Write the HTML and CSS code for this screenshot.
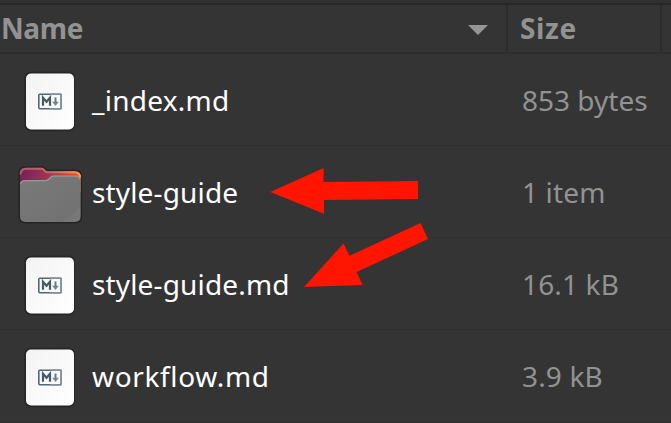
FILE: index.html
```html
<!DOCTYPE html>
<html lang="en">
<head>
<meta charset="utf-8">
<title>Files</title>
<link rel="stylesheet" href="styles.css">
</head>
<body>
<svg class="defs" width="0" height="0" aria-hidden="true">
  <defs>
    <linearGradient id="paper" x1="0" y1="0" x2="1" y2="1"><stop offset="0" stop-color="#f3f3f3"/><stop offset="1" stop-color="#fff"/></linearGradient>
    <linearGradient id="back" x1="0" y1="0" x2="1" y2="0"><stop offset="0" stop-color="#762158"/><stop offset=".48" stop-color="#a43650"/><stop offset="1" stop-color="#f15a24"/></linearGradient>
    <linearGradient id="backEdge" x1="0" y1="0" x2="1" y2="0"><stop offset="0" stop-color="#aa6070"/><stop offset=".5" stop-color="#c46566"/><stop offset="1" stop-color="#ff9657"/></linearGradient>
    <linearGradient id="front" x1="0" y1="0" x2="1" y2="1"><stop offset="0" stop-color="#7a7a7a"/><stop offset=".84" stop-color="#727272"/><stop offset=".85" stop-color="#777"/><stop offset="1" stop-color="#777"/></linearGradient>
    <symbol id="md" viewBox="0 0 64 64">
      <rect x="8" y="2.5" width="51" height="60" rx="6.5" fill="#242424" opacity=".45"/>
      <rect x="9" y="3.3" width="49.8" height="58.6" rx="6" fill="#252525"/>
      <rect x="10" y="4.5" width="48" height="56" rx="5" fill="url(#paper)"/>
      <rect x="22.8" y="25.3" width="22.4" height="14.4" rx="1" fill="none" stroke="#526873" stroke-width="1.6"/>
      <path d="M34 24.5h11q1 0 1 1v14q0 1-1 1H34v-1.6h10.4V26.1H34z" fill="#80919a"/>
      <path d="M27 36.8v-8l3.5 4 3.5-4v8" fill="none" stroke="#455c68" stroke-width="2.2"/>
      <path d="M39.5 28.5v5" stroke="#657982" stroke-width="2"/>
      <path d="M36.2 32.8h6.6L39.5 37z" fill="#758790"/>
    </symbol>
  </defs>
</svg>
<main class="files">
  <header class="head">
    <div class="cell name"><span class="t-name">Name</span><svg class="sort" width="20" height="10" viewBox="0 0 20 10"><path d="M0 0h20L10 10z" fill="#969696"/></svg></div>
    <div class="cell size"><span class="t-size">Size</span></div>
    <div class="cell rest"></div>
  </header>
  <div class="row"><svg class="icon"><use href="#md"/></svg><div class="file"><span class="t-index">_index.md</span></div><div class="amount"><span>853 bytes</span></div></div>
  <div class="row"><svg class="icon" viewBox="0 0 64 64"><g transform="translate(-.15 2.8) scale(1.037 1.01)">
      <path d="M2.5 9q0-6.5 6.5-6.5h16.5q1.8 0 2.8 1.5l1.7 1.7H57q7 0 7 7v39.8q0 6.5-6.5 6.5H9.5q-7 0-7-7z" fill="#252525"/>
      <path d="M4 9.5Q4 4 9.5 4h15.5q1.5 0 2.5 1.5L29.5 7.3h27q6 0 6 6V28H4z" fill="url(#back)"/>
      <path d="M4.5 10.5q0-5.5 5.5-5.5h15q1.5 0 2.3 1.5L29.5 8.3h27q5.5 0 5.5 5.5" fill="none" stroke="url(#backEdge)" stroke-width="2"/>
      <path d="M4 21q0-4.8 5-4.8h19.5q1.8 0 3-1.3l2-2q1-1.2 3-1.2h20q6 0 6 6V52q0 5.5-5.5 5.5H9.5Q4 57.5 4 52z" fill="url(#front)"/>
      <path d="M4.5 20q.5-3.3 5-3.3h19q2 0 3.2-1.4l2-2q1-1.1 2.8-1.1h20q4.5 0 5.3 3.5" fill="none" stroke="#969696" stroke-width="1.3"/>
    </g></svg><div class="file"><span class="t-guide">style-guide</span></div><div class="amount"><span class="t-small">1 item</span></div></div>
  <div class="row"><svg class="icon"><use href="#md"/></svg><div class="file"><span class="t-guide">style-guide.md</span></div><div class="amount"><span class="t-small">16.1 kB</span></div></div>
  <div class="row"><svg class="icon"><use href="#md"/></svg><div class="file"><span class="t-work">workflow.md</span></div><div class="amount"><span class="t-small">3.9 kB</span></div></div>
</main>
<svg class="arrows" width="671" height="423" viewBox="0 0 671 423" fill="#ff1500">
  <path d="M270.3 192L323.5 168V182L418 181V199L324 200V213.7z"/>
  <path d="M304 287L343.5 243.5L349.5 255.7L420.5 223L428 239L356.7 272L362.5 285z"/>
</svg>
</body>
</html>
```
FILE: styles.css
```css
* { box-sizing: border-box; }
body {
  margin: 0;
  width: 671px;
  height: 423px;
  overflow: hidden;
  background: #343434;
  color: #fff;
  font: 28px/40px "Noto Sans", sans-serif;
}
.defs { position: absolute; }
.files { border-top: 3px solid #303030; }
.head {
  display: flex;
  height: 51px;
  border-top: 2px solid #272727;
  border-bottom: 2px solid #2d2d2d;
  color: #929292;
  font-weight: 700;
}
.cell { display: flex; align-items: center; border-right: 2px solid #2d2d2d; }
.name { width: 508px; padding-left: 1px; justify-content: space-between; }
.size { width: 154px; padding-left: 12px; }
.rest { flex: 1; border: 0; }
.sort { margin-right: 18px; margin-top: 3px; }
.row {
  display: flex;
  align-items: center;
  height: 92px;
  border-bottom: 1px solid #303030;
}
.icon { width: 64px; height: 64px; margin: 2px 0 0 16px; flex: none; overflow: visible; }
.file { width: 442px; padding-left: 12px; flex: none; }
.amount { color: #929292; white-space: nowrap; }
span { display: inline-block; white-space: nowrap; vertical-align: top; }
.head span { margin-top: -1px; }
.t-name { letter-spacing: -0.4px; }
.t-size { letter-spacing: 0.6px; }
.t-index { letter-spacing: 0.25px; }
.t-guide { letter-spacing: 0.15px; }
.t-work { letter-spacing: 0.65px; }
.t-small { letter-spacing: 0.15px; }
.arrows { position: absolute; left: 0; top: 0; }
```
